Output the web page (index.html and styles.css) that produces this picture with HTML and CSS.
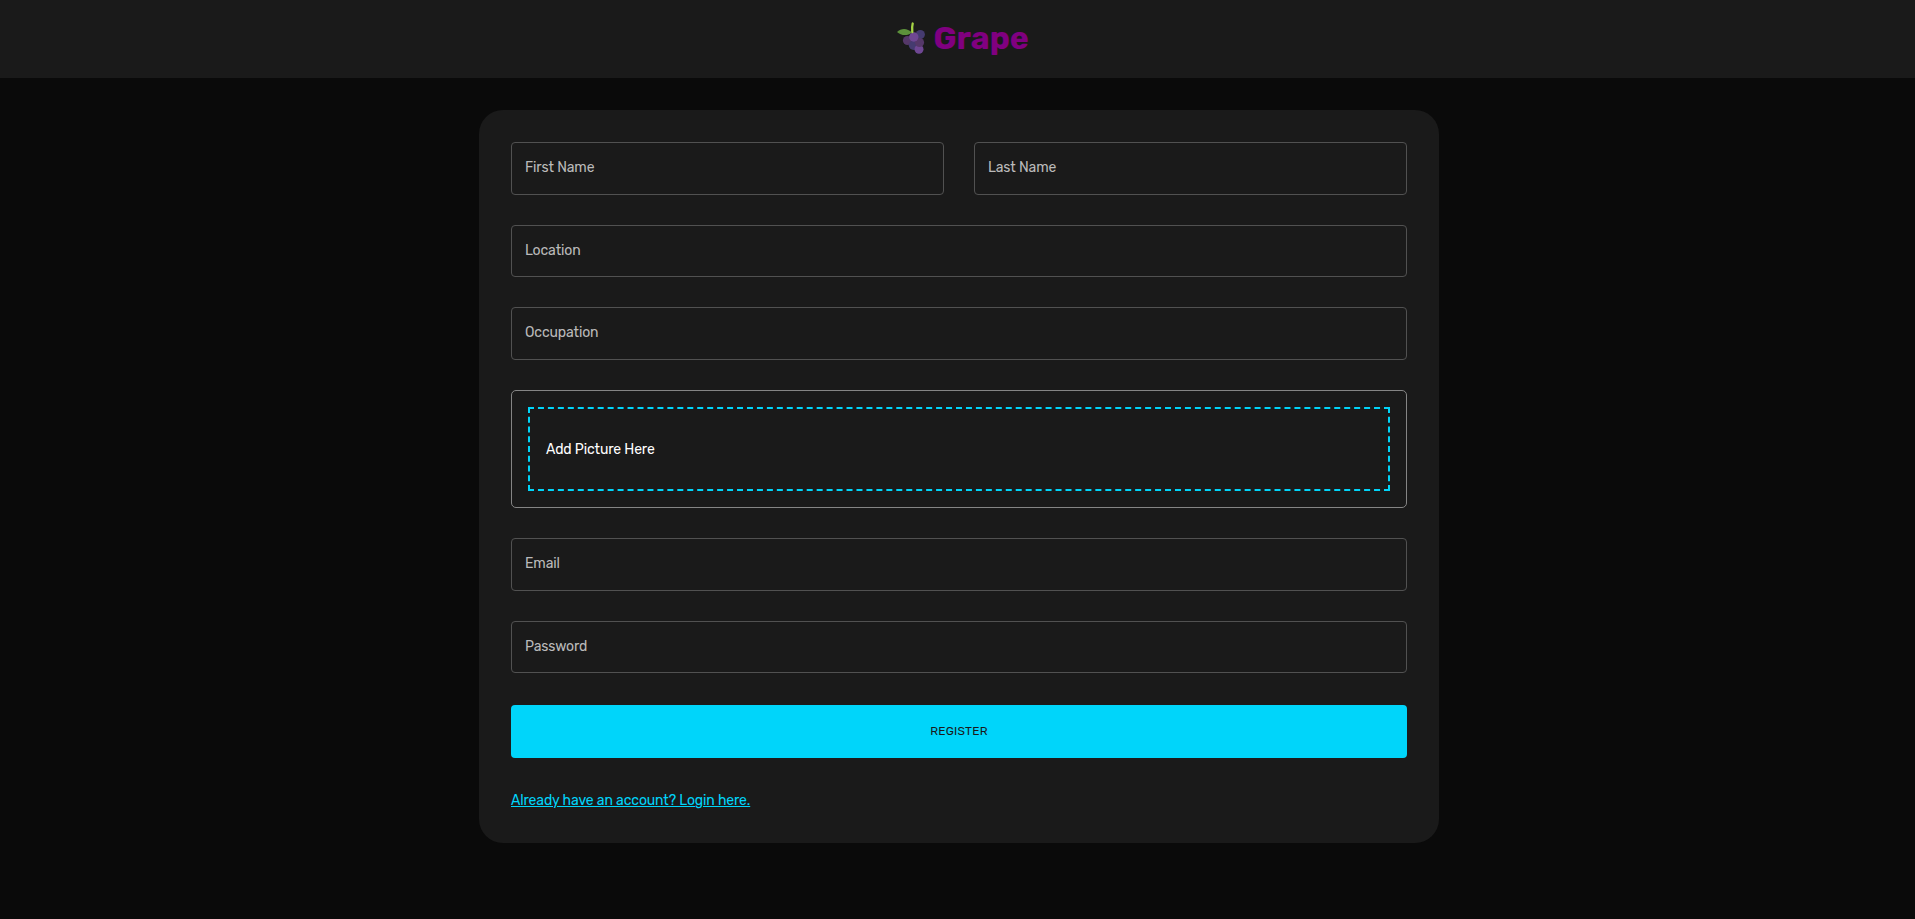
FILE: index.html
```html
<!DOCTYPE html>
<html lang="en">
<head>
<meta charset="utf-8">
<title>Grape</title>
<link rel="stylesheet" href="styles.css">
</head>
<body>
<header class="topbar">
  <svg class="logo" viewBox="0 0 28 32" aria-hidden="true">
    <path fill="#5c913b" d="M0 10C4 6 10 5.500 15 10.500C10 14.500 4 13.500 0 10Z"/>
    <circle fill="#453b70" cx="23.300" cy="12.500" r="4.600"/>
    <circle fill="#553869" cx="10.500" cy="18.500" r="4.600"/>
    <circle fill="#453b70" cx="16.500" cy="23.200" r="4.700"/>
    <circle fill="#6f4793" cx="22" cy="27.300" r="4.500"/>
    <circle fill="#553869" cx="22.500" cy="20.500" r="4.600"/>
    <circle fill="#6f4793" cx="16.800" cy="15" r="4.700"/>
    <path fill="none" stroke="#a6d445" stroke-width="2.300" stroke-linecap="round" d="M15.300 10C15 7 15 4 15.700 1.500"/>
  </svg>
  <h1 class="brand">Grape</h1>
</header>
<main class="card">
  <form class="form">
    <div class="row">
      <label class="field">First Name</label>
      <label class="field">Last Name</label>
    </div>
    <label class="field">Location</label>
    <label class="field">Occupation</label>
    <div class="picture"><div class="dropzone">Add Picture Here</div></div>
    <label class="field">Email</label>
    <label class="field">Password</label>
  </form>
  <button class="register" type="button">REGISTER</button>
  <a class="login">Already have an account? Login here.</a>
</main>
</body>
</html>
```
FILE: styles.css
```css
* { box-sizing: border-box; }
body {
  margin: 0;
  min-height: 919px;
  background: #0a0a0a;
  color: #fff;
  font: 450 14px/20px Rubik, Roboto, sans-serif;
  letter-spacing: -0.13px;
}
.topbar {
  display: flex;
  justify-content: center;
  height: 78px;
  padding: 19px 0 0 10px;
  gap: 9px;
  background: #1a1a1a;
}
.logo { width: 28px; height: 32px; margin-top: 2.5px; }
.brand {
  margin: 0;
  width: 95px;
  font-size: 32px;
  line-height: 38px;
  font-weight: 700;
  letter-spacing: 0;
  color: #800080;
  white-space: nowrap;
}
.card {
  width: 960px;
  height: 733px;
  margin: 32px auto 0 479px;
  padding: 32px;
  border-radius: 24px;
  background: #1a1a1a;
}
.form { display: flex; flex-direction: column; gap: 30px; }
.row { display: grid; grid-template-columns: 1fr 1fr; gap: 30px; }
.field {
  display: flex;
  align-items: center;
  height: 52.7px;
  padding: 0 13px 0.5px;
  border: 1px solid #515151;
  border-radius: 4px;
  color: #bababa;
}
.picture {
  height: 118px;
  padding: 16px;
  border: 1px solid #858585;
  border-radius: 5px;
}
.dropzone {
  display: flex;
  align-items: center;
  height: 84px;
  padding: 1px 16px 0;
  border: 2px dashed #00d5fa;
}
.register {
  display: block;
  width: 100%;
  height: 53px;
  margin: 32px 0 33px;
  border: 0;
  border-radius: 4px;
  background: #00d5fa;
  color: #1a1a1a;
  font: 450 12px/21px Rubik, Roboto, sans-serif;
  letter-spacing: 0.2px;
}
.login { color: #00d5fa; text-decoration: underline; }
```
